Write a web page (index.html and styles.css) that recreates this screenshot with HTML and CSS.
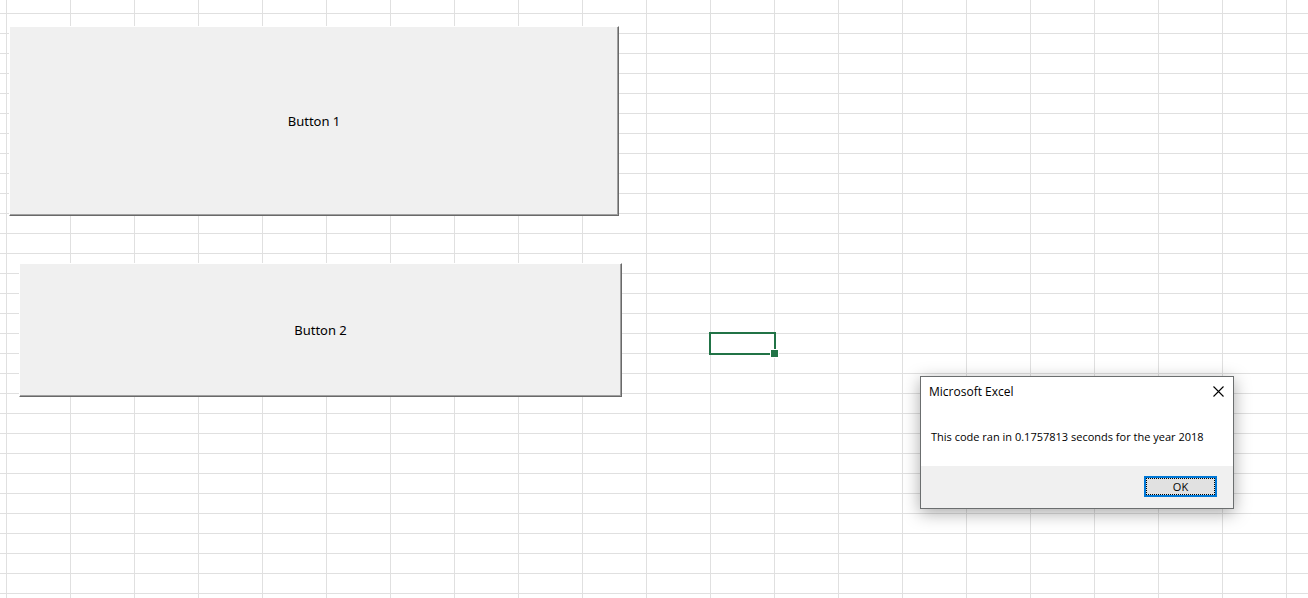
FILE: index.html
```html
<!DOCTYPE html>
<html lang="en">
<head>
<meta charset="utf-8">
<title>Microsoft Excel</title>
<link rel="stylesheet" href="styles.css">
</head>
<body>
<main class="sheet">
  <button class="form-button form-button-one" type="button">Button 1</button>
  <button class="form-button form-button-two" type="button">Button 2</button>
  <div class="active-cell"></div>
  <section class="dialog" role="dialog" aria-labelledby="dialog-title">
    <header class="dialog-header">
      <h1 class="dialog-title" id="dialog-title">Microsoft Excel</h1>
      <button class="dialog-close" type="button" aria-label="Close">
        <svg width="11" height="11" viewBox="0 0 11 11" fill="none" stroke="#000" stroke-width="1.1"><path d="M.5.5l10 10M10.5.5l-10 10"/></svg>
      </button>
    </header>
    <p class="dialog-message">This code ran in 0.1757813 seconds for the year 2018</p>
    <footer class="dialog-footer">
      <button class="dialog-ok" type="button"><span class="focus-ring">OK</span></button>
    </footer>
  </section>
</main>
</body>
</html>
```
FILE: styles.css
```css
* { box-sizing: border-box; }
body {
  margin: 0;
  color: #000;
  font-family: "Open Sans", "Noto Sans", sans-serif;
}
.sheet {
  position: relative;
  min-height: 100vh;
  overflow: hidden;
  background-color: #fff;
  background-image:
    linear-gradient(to right, #e0e0e0 1px, transparent 1px),
    linear-gradient(to bottom, #e0e0e0 1px, transparent 1px);
  background-size: 64px 20px;
  background-position: 6px 13px;
}
.form-button {
  position: absolute;
  padding: 0;
  border: 1px solid;
  border-color: #fff #696969 #696969 #fff;
  background: #f0f0f0;
  box-shadow: inset -1px -1px #a0a0a0;
  color: #000;
  font-family: "Noto Sans", sans-serif;
  font-size: 13px;
  line-height: 18px;
}
.form-button-one { left: 9px; top: 26px; width: 610px; height: 190px; }
.form-button-two { left: 19px; top: 263px; width: 603px; height: 134px; }
.active-cell {
  position: absolute;
  left: 709px;
  top: 332px;
  width: 67px;
  height: 23px;
  border: 2px solid #217346;
}
.active-cell::after {
  content: "";
  position: absolute;
  right: -5px;
  bottom: -5px;
  width: 7px;
  height: 7px;
  border: 1px solid #fff;
  background: #217346;
}
.dialog {
  position: absolute;
  left: 920px;
  top: 376px;
  width: 314px;
  border: 1px solid #6b6e6f;
  background: #fff;
  box-shadow: 0 4px 16px rgba(0, 0, 0, .34);
}
.dialog-header {
  display: flex;
  align-items: center;
  justify-content: space-between;
  height: 29px;
  padding: 0 9px 0 8px;
}
.dialog-title {
  margin: 0;
  font-size: 12px;
  font-weight: 400;
  line-height: 16px;
}
.dialog-close {
  display: flex;
  padding: 0;
  border: 0;
  background: none;
}
.dialog-message {
  margin: 0;
  padding: 23px 10px 21px;
  font-size: 11px;
  line-height: 16px;
  white-space: nowrap;
}
.dialog-footer {
  display: flex;
  justify-content: flex-end;
  padding: 10px 16px 11px;
  background: #f0f0f0;
}
.dialog-ok {
  display: flex;
  width: 73px;
  height: 21px;
  padding: 0;
  border: 2px solid #0078d7;
  background: #e1e1e1;
  color: #000;
  font-family: inherit;
  font-size: 11px;
  line-height: 15px;
}
.focus-ring {
  flex: 1;
  border: 1px dotted #000;
}
```
